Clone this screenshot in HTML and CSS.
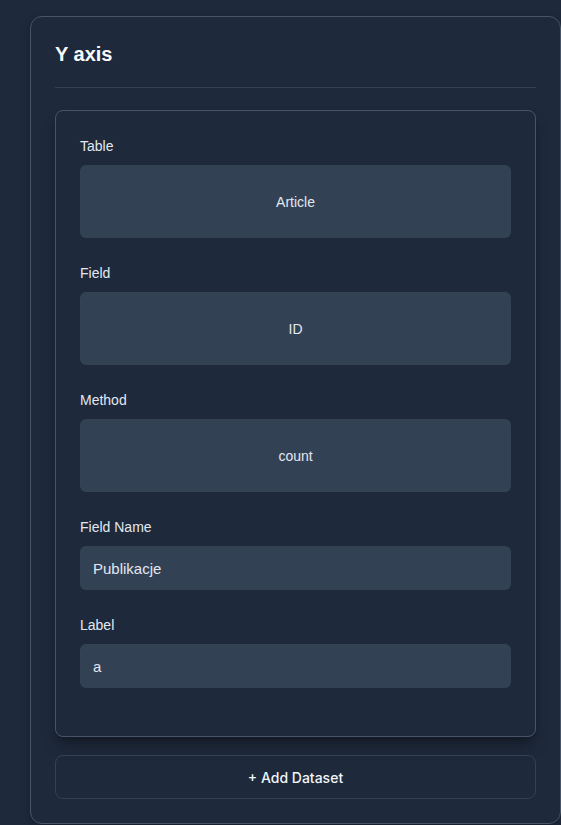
FILE: index.html
```html
<!DOCTYPE html>
<html lang="pl">
<head>
<meta charset="utf-8">
<title>Y axis</title>
<link rel="stylesheet" href="styles.css">
</head>
<body>
<section class="panel">
  <h2 class="panel-title">Y axis</h2>
  <div class="dataset">
    <div class="field">
      <label class="field-label">Table</label>
      <div class="select">Article</div>
    </div>
    <div class="field">
      <label class="field-label">Field</label>
      <div class="select">ID</div>
    </div>
    <div class="field">
      <label class="field-label">Method</label>
      <div class="select">count</div>
    </div>
    <div class="field">
      <label class="field-label">Field Name</label>
      <div class="input">Publikacje</div>
    </div>
    <div class="field">
      <label class="field-label">Label</label>
      <div class="input">a</div>
    </div>
  </div>
  <button class="add-btn">+ Add Dataset</button>
</section>
</body>
</html>
```
FILE: styles.css
```css
* { box-sizing: border-box; }
html, body { height: 100%; }
body {
  margin: 0;
  background: #1e293b;
  font-family: "Liberation Sans", Arial, sans-serif;
  color: #e2e8f0;
  padding: 16px 0 0 30px;
}
.panel {
  width: 531px;
  height: 808px;
  border: 1px solid #475569;
  border-radius: 12px;
  padding: 24px 24px 24px 24px;
  background: #1e293b;
  box-shadow: 0 4px 10px rgba(0,0,0,0.25);
  display: flex;
  flex-direction: column;
}
.panel-title {
  margin: 0;
  font-size: 20px;
  line-height: 27px;
  font-weight: 700;
  color: #f8fafc;
  padding-bottom: 19px;
  border-bottom: 1px solid #334155;
  width: 481px;
}
.dataset {
  margin-top: 22px;
  width: 481px;
  border: 1px solid #475569;
  border-radius: 8px;
  padding: 24px 24px 24px 24px;
  box-shadow: 0 10px 15px -3px rgba(0,0,0,0.35), 0 4px 6px -4px rgba(0,0,0,0.3);
  display: flex;
  flex-direction: column;
  gap: 24px;
}
.dataset .field:last-child { margin-bottom: 24px; }
.field { display: flex; flex-direction: column; }
.field-label {
  font-size: 14px;
  line-height: 22px;
  margin-bottom: 8px;
  color: #e2e8f0;
}
.select {
  height: 73px;
  background: #334155;
  border-radius: 6px;
  display: flex;
  align-items: center;
  justify-content: center;
  font-size: 14px;
  color: #e2e8f0;
}
.input {
  height: 44px;
  background: #334155;
  border-radius: 6px;
  display: flex;
  align-items: center;
  padding-left: 13px;
  font-size: 15px;
  color: #e2e8f0;
}
.add-btn {
  margin-top: 18px;
  width: 481px;
  height: 44px;
  background: transparent;
  border: 1px solid #334155;
  border-radius: 8px;
  color: #f1f5f9;
  font-family: Inter, "Liberation Sans", sans-serif;
  font-weight: 500;
  font-size: 14px;
  cursor: pointer;
}
```
